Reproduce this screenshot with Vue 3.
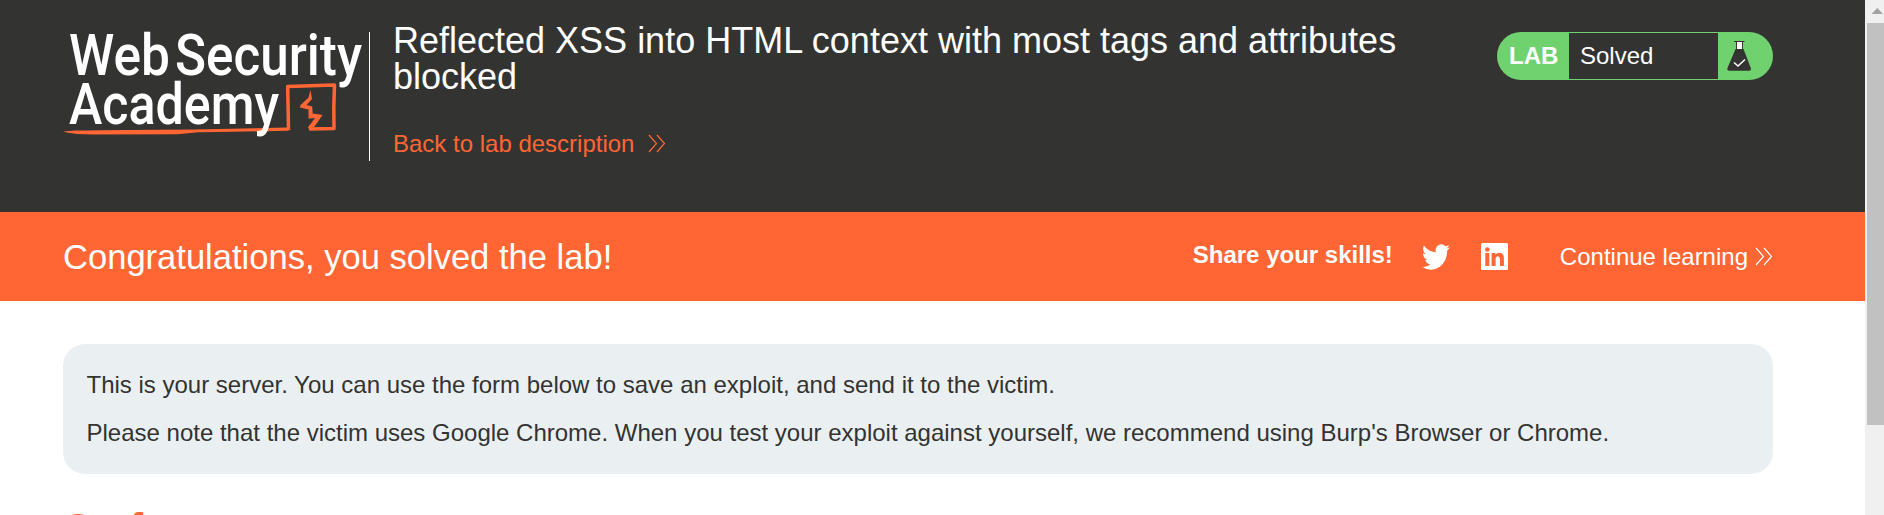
<script setup>
const notes = [
  'This is your server. You can use the form below to save an exploit, and send it to the victim.',
  "Please note that the victim uses Google Chrome. When you test your exploit against yourself, we recommend using Burp's Browser or Chrome.",
]
</script>

<template>
  <div class="window">
    <main class="page">
      <header class="header">
        <svg class="logo" width="306" height="125" viewBox="0 0 306 125">
          <g class="wordmark">
            <text x="6" y="43" textLength="101" lengthAdjust="spacingAndGlyphs">Web</text>
            <text x="112" y="43" textLength="187" lengthAdjust="spacingAndGlyphs">Security</text>
          </g>
          <path class="underline" d="M0 99.500L12 98.600Q60 97.800 130 97.500L224 95.500V97L226 98.800H224L170 99.800L135 100.300L115 102.200L30 102.500L14 102L5 100.800Z" />
          <path class="box" d="M225.500 98L224.700 54.500L271.500 53L270.800 75L271 96.500L247.500 97L247.800 93" />
          <path class="bolt" d="M247.500 58L249 67L243.500 73L249.200 74.500L249.700 81.500L259.500 83L252 94L247 98L245 95.500L252 86L245.500 86.500V77.500L237 75.500L237.200 73.500L245.500 65.500Z" />
          <g class="wordmark">
            <text x="6" y="91.700" textLength="210" lengthAdjust="spacingAndGlyphs">Academy</text>
          </g>
        </svg>
        <div class="title">
          <h2>Reflected XSS into HTML context with most tags and attributes blocked</h2>
          <a class="back">Back to lab description
            <svg width="18" height="20" viewBox="0 0 18 20"><path d="M1 1L8.500 9.500L1 18M9 1L16.500 9.500L9 18" /></svg>
          </a>
        </div>
        <div class="status">
          <b>LAB</b>
          <span>Solved</span>
          <svg width="55" height="48" viewBox="0 0 55 48">
            <path class="glass" d="M16 9.500H26.500M18.500 9.500V17M24.500 9.500V17" />
            <rect class="neck" x="19" y="10" width="5" height="7" />
            <path class="flask" d="M17.500 17H25.500L32.800 36Q33.500 38.800 31 38.800H11.500Q8.500 38.800 9.500 36Z" />
            <path class="tick" d="M16 30.500L20 34L27 27.500" />
          </svg>
        </div>
      </header>

      <section class="banner">
        <h2>Congratulations, you solved the lab!</h2>
        <strong>Share your skills!</strong>
        <svg class="twitter" width="28" height="26" viewBox="0 2 24 20" preserveAspectRatio="none">
          <path d="M23.950 4.570a10 10 0 0 1-2.820.770 4.960 4.960 0 0 0 2.160-2.720c-.950.550-2 .950-3.130 1.180a4.920 4.920 0 0 0-8.380 4.480C7.690 8.090 4.070 6.130 1.640 3.160a4.930 4.930 0 0 0 1.520 6.570 4.900 4.900 0 0 1-2.230-.610v.060a4.920 4.920 0 0 0 3.950 4.830 5 5 0 0 1-2.210.080 4.940 4.940 0 0 0 4.600 3.420A9.870 9.870 0 0 1 0 19.540a14 14 0 0 0 7.550 2.210c9.050 0 14-7.500 14-13.980 0-.210 0-.420-.020-.630a9.940 9.940 0 0 0 2.460-2.550z" />
        </svg>
        <svg class="linkedin" width="27" height="27" viewBox="0 0 27 27">
          <rect width="27" height="27" rx="1.500" />
          <g class="cut">
            <circle cx="6.300" cy="6.500" r="2.300" />
            <path d="M4.300 10H8.300V23H4.300ZM10.600 10H14.400V11.800C16.500 8.700 22.900 8.800 22.900 15V23H18.900V16C18.900 12.300 14.600 12.500 14.600 16V23H10.600Z" />
          </g>
        </svg>
        <a class="continue">Continue learning
          <svg width="18" height="20" viewBox="0 0 18 20"><path d="M1 1L8.500 9.500L1 18M9 1L16.500 9.500L9 18" /></svg>
        </a>
      </section>

      <section class="notice">
        <p v-for="note in notes" :key="note">{{ note }}</p>
      </section>
      <h1>Craft a response:</h1>
    </main>
    <aside class="scrollbar">
      <svg width="17" height="23" viewBox="0 0 17 23"><path d="M4.500 14L10.300 8L16 14Z" /></svg>
      <div class="thumb"></div>
    </aside>
  </div>
</template>

<style>
body { overflow: hidden; }
</style>

<style scoped>
* { box-sizing: border-box; margin: 0; }
.window {
  display: flex;
  width: 1884px;
  height: 515px;
  overflow: hidden;
  background: #fff;
  color: #333332;
  font: 24px/28px "Liberation Sans", Arial, sans-serif;
}
.page { flex: none; width: 1865px; height: 515px; overflow: hidden; }
svg { flex: none; display: block; }
.header {
  display: flex;
  height: 212px;
  padding: 32px 92px 0 63px;
  background: #333332;
  color: #fff;
}
.logo { overflow: visible; }
.wordmark { fill: #fff; font: 500 57px Roboto, sans-serif; }
.underline, .bolt { fill: #ff6633; }
.box { fill: none; stroke: #ff6633; stroke-width: 3.500px; stroke-linejoin: round; }
.title {
  width: 1071px;
  height: 129px;
  border-left: 1px solid #fff;
  padding-left: 23px;
}
.title h2 { width: 1030px; margin-top: -9px; font-size: 36px; line-height: 36px; font-weight: 400; }
.back { display: flex; gap: 14px; margin-top: 35px; color: #ff6633; align-items: center; }
.back svg, .continue svg { fill: none; stroke: currentColor; stroke-width: 1.200px; }
.status {
  display: flex;
  width: 276px;
  height: 48px;
  margin-left: auto;
  border-radius: 24px;
  overflow: hidden;
  background: #70d26f;
  line-height: 48px;
}
.status b { width: 72px; padding-left: 12px; }
.status span { width: 149px; margin: 1px 0; padding-left: 11px; line-height: 46px; background: #333332; }
.glass { fill: none; stroke: #333332; stroke-width: 1px; }
.neck { fill: #fff; }
.flask { fill: #333332; }
.tick { fill: none; stroke: #fff; stroke-width: 1.500px; }
.banner {
  display: flex;
  align-items: center;
  height: 89px;
  padding: 0 92px 0 63px;
  background: #ff6633;
  color: #fff;
}
.banner h2 { margin-right: auto; font-size: 34.560px; line-height: 40px; font-weight: 400; }
.banner strong { margin-top: -4px; }
.twitter { margin-left: 29px; fill: #fff; }
.linkedin { margin-left: 31px; fill: #fff; }
.cut { fill: #ff6633; }
.continue { display: flex; align-items: center; gap: 7px; margin-left: 52px; }
.notice {
  display: grid;
  gap: 20px;
  height: 130px;
  margin: 43px 92px 0 63px;
  padding: 27px 23.500px;
  border-radius: 22px;
  background: #eaf0f2;
}
.notice p { height: 28px; white-space: nowrap; }
h1 { margin: 33px 63px 0; color: #ff6633; font-size: 40px; line-height: 42px; }
.scrollbar { flex: none; width: 19px; padding-left: 2px; background: #f0f0f0; }
.scrollbar svg { fill: #a3a3a3; }
.thumb { width: 17px; height: 402px; background: #c1c1c1; }
</style>
